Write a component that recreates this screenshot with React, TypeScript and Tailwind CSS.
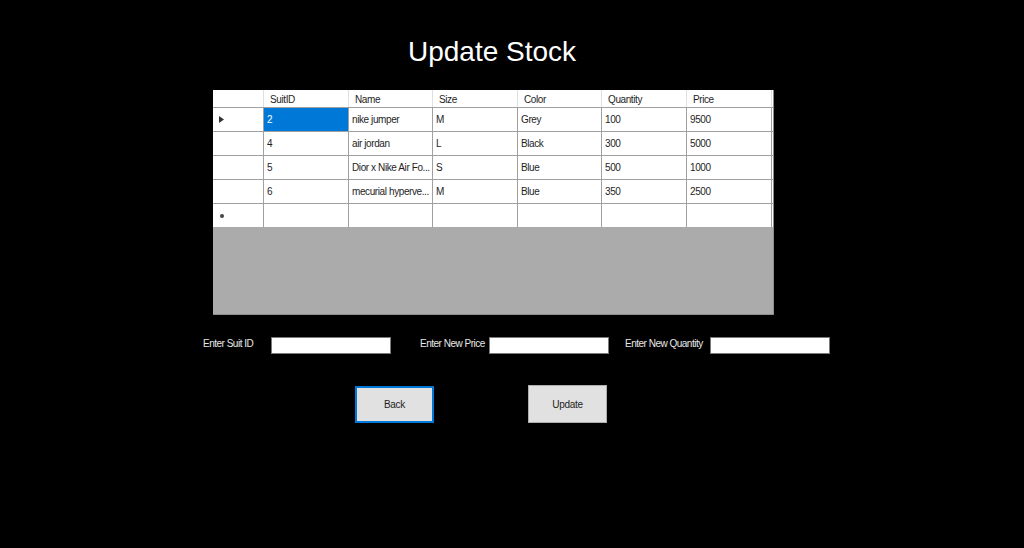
const columns = ["SuitID", "Name", "Size", "Color", "Quantity", "Price"];

const rows = [
  ["2", "nike jumper", "M", "Grey", "100", "9500"],
  ["4", "air jordan", "L", "Black", "300", "5000"],
  ["5", "Dior x Nike Air Fo...", "S", "Blue", "500", "1000"],
  ["6", "mecurial hyperve...", "M", "Blue", "350", "2500"],
];

const colWidths = ["w-[85px]", "w-[84px]", "w-[85px]", "w-[84px]", "w-[85px]", "w-[85px]"];

function FieldInput({ label, labelWidth }: { label: string; labelWidth: string }) {
  return (
    <div className="flex items-center">
      <span className={`${labelWidth} whitespace-nowrap text-[10px] leading-[12px] mt-[-3px] text-[#e8e8e8] tracking-[-0.5px]`}>
        {label}
      </span>
      <input
        type="text"
        className="w-[120px] h-[17px] bg-white border border-[#7a7a7a] outline-none"
      />
    </div>
  );
}

export default function App() {
  return (
    <div
      className="w-[1024px] h-[548px] bg-black flex flex-col"
      style={{ fontFamily: '"Liberation Sans", Arial, sans-serif' }}
    >
      <h1 className="mt-[36px] w-[984px] text-center text-[28px] leading-[32px] text-white">
        Update Stock
      </h1>

      <div className="mt-[22px] ml-[213px] w-[561px] h-[225px] bg-[#ababab] border-r border-b border-[#8c8c8c]">
        {/* header */}
        <div className="flex h-[18px] bg-white border-b border-[#a0a0a0]">
          <div className="w-[51px] border-r border-[#e0e0e0]" />
          {columns.map((c, i) => (
            <div
              key={c}
              className={`${colWidths[i]} border-r border-[#e0e0e0] pl-[6px] text-[10px] leading-[19px] text-[#1e1e1e] tracking-[-0.4px] whitespace-nowrap overflow-hidden`}
            >
              {c}
            </div>
          ))}
        </div>
        {rows.map((r, ri) => (
          <div key={ri} className="flex h-[24px] bg-white border-b border-[#a0a0a0]">
            <div className="w-[51px] border-r border-[#a0a0a0] flex items-center pl-[6px]">
              {ri === 0 && (
                <svg width="5" height="7" viewBox="0 0 5 7">
                  <path d="M0 0L5 3.5L0 7Z" fill="#333" />
                </svg>
              )}
            </div>
            {r.map((v, ci) => (
              <div
                key={ci}
                className={`${colWidths[ci]} border-r border-[#a0a0a0] pl-[3px] text-[10px] leading-[24px] tracking-[-0.4px] whitespace-nowrap overflow-hidden ${
                  ri === 0 && ci === 0 ? "bg-[#0078d7] text-white" : "text-[#1e1e1e]"
                }`}
              >
                {v}
              </div>
            ))}
          </div>
        ))}
        <div className="flex h-[23px] bg-white">
          <div className="w-[51px] border-r border-[#a0a0a0] flex items-center pl-[7px]">
            <span className="w-[4px] h-[4px] rounded-full bg-[#444]" />
          </div>
          {colWidths.map((w, ci) => (
            <div key={ci} className={`${w} border-r border-[#a0a0a0]`} />
          ))}
        </div>
      </div>

      <div className="mt-[22px] ml-[203px] flex items-center">
        <FieldInput label="Enter Suit ID" labelWidth="w-[68px]" />
        <div className="ml-[29px]">
          <FieldInput label="Enter New Price" labelWidth="w-[69px]" />
        </div>
        <div className="ml-[16px]">
          <FieldInput label="Enter New Quantity" labelWidth="w-[85px]" />
        </div>
      </div>

      <div className="mt-[32px] ml-[355px] flex items-start gap-[94px]">
        <button className="w-[79px] h-[37px] bg-[#e1e1e1] border-2 border-[#0078d7] text-[10px] text-[#1e1e1e] tracking-[-0.3px]">
          Back
        </button>
        <button className="mt-[-1px] w-[79px] h-[38px] bg-[#e1e1e1] border border-[#adadad] text-[10px] text-[#1e1e1e] tracking-[-0.3px]">
          Update
        </button>
      </div>
    </div>
  );
}
